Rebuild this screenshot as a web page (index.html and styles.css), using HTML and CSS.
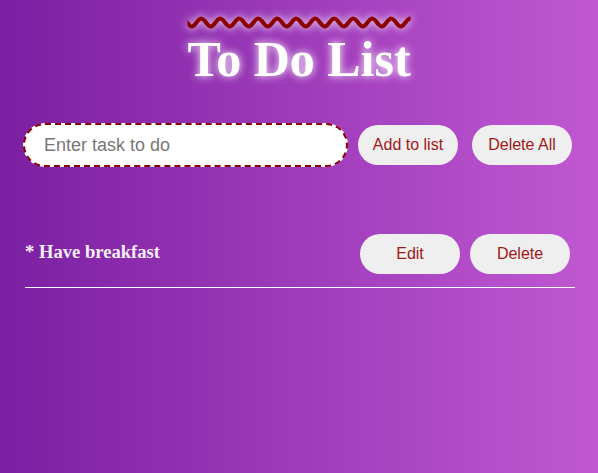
FILE: index.html
```html
<!DOCTYPE html>
<html>
<head>
<meta charset="utf-8">
<link rel="stylesheet" href="styles.css">
</head>
<body>
<div class="app">
  <h1 class="title">To Do List</h1>
  <div class="form-row">
    <input class="task-input" type="text" placeholder="Enter task to do">
    <button class="btn btn-add">Add to list</button>
    <button class="btn btn-clear">Delete All</button>
  </div>
  <ul class="task-list">
    <li class="task">
      <span class="task-text">* Have breakfast</span>
      <span class="task-actions">
        <button class="btn">Edit</button>
        <button class="btn">Delete</button>
      </span>
    </li>
  </ul>
</div>
</body>
</html>
```
FILE: styles.css
```css
html, body {
  margin: 0;
  height: 100%;
}
body {
  background: linear-gradient(to right, #7b1fa2, #c158d2);
  font-family: "Liberation Serif", "Times New Roman", serif;
}
.app {
  width: 550px;
  margin: 0 auto;
  padding-top: 1px;
}
.title {
  margin: 29px 0 0;
  text-align: center;
  font-size: 50px;
  line-height: 58px;
  font-weight: bold;
  color: #fff;
  text-decoration: overline wavy #8b0000;
  text-decoration-thickness: 4px;
  text-shadow: 0 0 8px #fff;
}
.form-row {
  display: flex;
  align-items: center;
  margin-top: 35px;
  margin-left: -1px;
}
.task-input {
  box-sizing: border-box;
  width: 325px;
  height: 44px;
  border: 2px dashed #8b0000;
  border-radius: 22px;
  padding: 0 19px;
  font-family: "Liberation Sans", Arial, sans-serif;
  font-size: 18px;
  outline: none;
  background: #fff;
}
.task-input::placeholder {
  color: #777;
}
.btn {
  width: 100px;
  height: 40px;
  border: none;
  border-radius: 20px;
  background: #efefef;
  color: #a01818;
  font-family: "Liberation Sans", Arial, sans-serif;
  font-size: 16px;
  padding: 0;
}
.btn-add {
  margin-left: 10px;
}
.btn-clear {
  margin-left: 14px;
}
.task-list {
  list-style: none;
  margin: 67px 0 0;
  padding: 0;
}
.task {
  display: flex;
  justify-content: space-between;
  align-items: center;
  padding: 0 0 13px 0;
  border-bottom: 1px solid #fff;
  margin: 0 -1px 0 1px;
}
.task-text {
  color: #f8f0f8;
  font-size: 18.6px;
  font-weight: bold;
  margin-bottom: 4px;
}
.task-actions {
  display: flex;
  gap: 10px;
  margin-right: 5px;
}
```
